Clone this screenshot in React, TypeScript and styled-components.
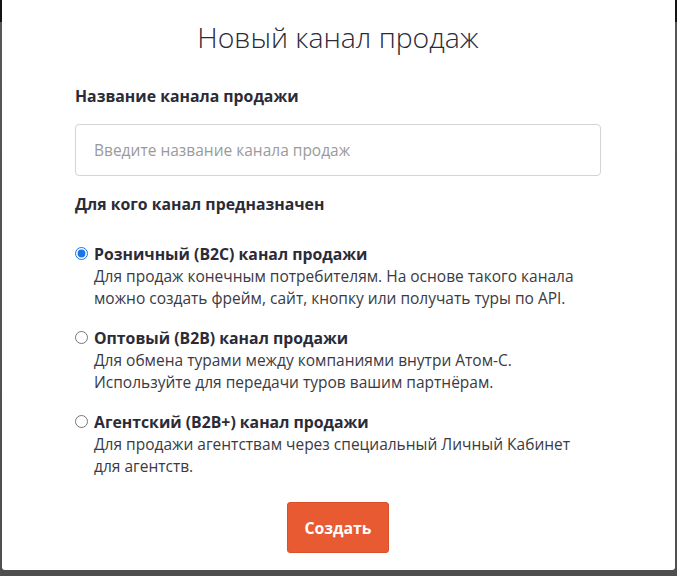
import styled, { createGlobalStyle } from 'styled-components';

const GlobalStyle = createGlobalStyle`
  html, body {
    margin: 0;
    padding: 0;
    height: 100%;
  }
  body {
    background: linear-gradient(to bottom, #141414 0, #141414 22px, #565656 22px, #4f4f4f 100%);
    font-family: 'Open Sans', 'Noto Sans', sans-serif;
    color: #2b2b38;
  }
`;

const Overlay = styled.div`
  width: 677px;
  height: 576px;
  padding: 0 2px 6px;
  box-sizing: border-box;
`;

const Modal = styled.div`
  background: #fff;
  height: 570px;
  border-radius: 0 0 3px 3px;
  padding: 0 74px 0 73px;
  box-sizing: border-box;
  display: flex;
  flex-direction: column;

  & > * {
    flex-shrink: 0;
  }
`;

const Title = styled.h2`
  margin: 18px 0 0;
  font-size: 28.4px;
  font-weight: 300;
  line-height: 38px;
  text-align: center;
  color: #2b2b38;
`;

const Label = styled.div`
  font-size: 15.8px;
  font-weight: 700;
  line-height: 22px;
  color: #2b2b38;
`;

const NameLabel = styled(Label)`
  margin-top: 29px;
`;

const TextInput = styled.input`
  margin-top: 17px;
  height: 52px;
  box-sizing: border-box;
  border: 1px solid #d4d4d4;
  border-radius: 4px;
  padding: 0 18px;
  font-family: inherit;
  font-size: 15.5px;
  color: #2b2b38;
  outline: none;

  &::placeholder {
    color: #9a9a9a;
  }
`;

const TargetLabel = styled(Label)`
  margin-top: 17px;
`;

const Options = styled.div`
  margin-top: 28px;
  display: flex;
  flex-direction: column;
  gap: 18px;
`;

const Option = styled.label`
  display: grid;
  grid-template-columns: 19px 1fr;
  cursor: pointer;
`;

const Radio = styled.input`
  width: 13px;
  height: 13px;
  margin: 4px 0 0 0;
  accent-color: #1a73e8;
`;

const OptionTitle = styled.div`
  font-size: 15.8px;
  font-weight: 700;
  line-height: 22px;
  color: #2b2b38;
`;

const OptionText = styled.div`
  grid-column: 2;
  max-width: 482px;
  font-size: 15.5px;
  line-height: 22px;
  color: #3a3a44;
`;

const Footer = styled.div`
  margin-top: 25px;
  display: flex;
  justify-content: center;
`;

const SubmitButton = styled.button`
  width: 102px;
  height: 51px;
  background: #e85a32;
  border: 1px solid #d9502b;
  border-radius: 3px;
  color: #fff;
  font-family: inherit;
  font-size: 15.8px;
  font-weight: 700;
  cursor: pointer;
`;

const channels = [
  {
    id: 'b2c',
    title: 'Розничный (B2C) канал продажи',
    text: 'Для продаж конечным потребителям. На основе такого канала можно создать фрейм, сайт, кнопку или получать туры по API.',
  },
  {
    id: 'b2b',
    title: 'Оптовый (B2B) канал продажи',
    text: 'Для обмена турами между компаниями внутри Атом-С. Используйте для передачи туров вашим партнёрам.',
  },
  {
    id: 'b2bplus',
    title: 'Агентский (B2B+) канал продажи',
    text: 'Для продажи агентствам через специальный Личный Кабинет для агентств.',
  },
];

export default function App() {
  return (
    <>
      <GlobalStyle />
      <Overlay>
        <Modal>
          <Title>Новый канал продаж</Title>
          <NameLabel>Название канала продажи</NameLabel>
          <TextInput placeholder="Введите название канала продаж" />
          <TargetLabel>Для кого канал предназначен</TargetLabel>
          <Options>
            {channels.map((c, i) => (
              <Option key={c.id}>
                <Radio type="radio" name="channel" defaultChecked={i === 0} />
                <OptionTitle>{c.title}</OptionTitle>
                <OptionText>{c.text}</OptionText>
              </Option>
            ))}
          </Options>
          <Footer>
            <SubmitButton>Создать</SubmitButton>
          </Footer>
        </Modal>
      </Overlay>
    </>
  );
}
